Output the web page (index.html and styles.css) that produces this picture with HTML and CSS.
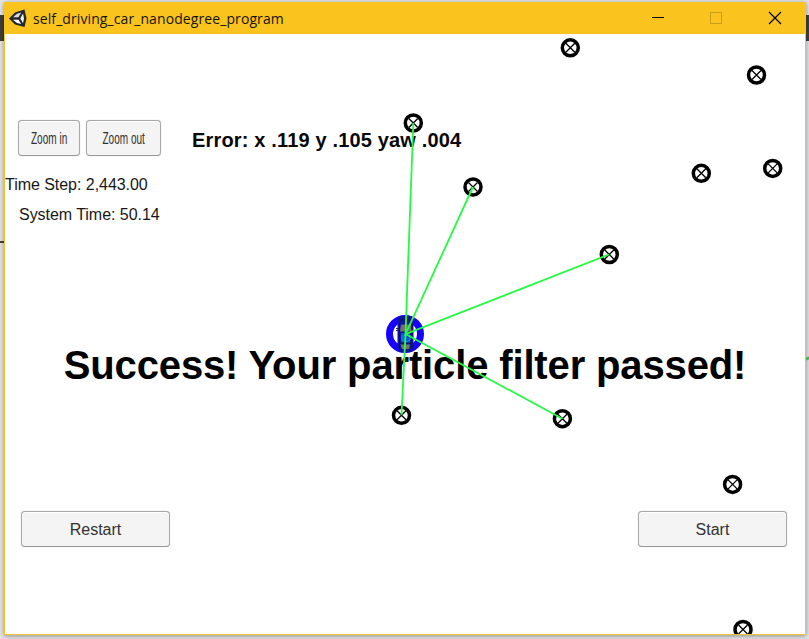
FILE: index.html
```
<!DOCTYPE html>
<html lang="en">
<head>
<meta charset="utf-8">
<title>self_driving_car_nanodegree_program</title>
<link rel="stylesheet" href="styles.css">
</head>
<body>
<div class="desktop-strip"></div>
<div class="desktop-line"></div>
<div class="window">
  <header class="titlebar">
    <svg class="logo" width="18" height="19" viewBox="0 0 18 19">
      <path d="M0 9.5 6 3.5 15.5 0.5 17.5 9.5 15.5 18 6 15.5Z" fill="#25282b"/>
      <path d="M4 8.3 8 4.7 12.2 3.5 9.5 8.3Z" fill="#d5dde2"/>
      <path d="M4 10.7 9.5 10.7 12.2 15 8 14Z" fill="#fff"/>
      <path d="M11.3 9.5 14 4.5 15 9.5 14 14.3Z" fill="#f4f7f8"/>
    </svg>
    <span class="title">self_driving_car_nanodegree_program</span>
    <svg class="controls" width="125" height="14" viewBox="0 0 125 14" fill="none" shape-rendering="crispEdges">
      <path d="M0 6.5H12" stroke="#000"/>
      <rect x="58.5" y="1.5" width="11" height="11" stroke="#c99c1c"/>
      <path d="M117 1 129 13M129 1 117 13" stroke="#000" stroke-width="1.2" shape-rendering="auto"/>
    </svg>
  </header>
  <main class="scene">
    <div class="top">
      <div class="zoom">
        <button class="btn zoom-in"><span>Zoom in</span></button>
        <button class="btn zoom-out"><span>Zoom out</span></button>
      </div>
      <div class="error"><span>Error: x .119 y .105 yaw .004</span></div>
    </div>
    <p class="stat">Time Step: 2,443.00</p>
    <p class="stat system">System Time: 50.14</p>
    <h1 class="message"><span>Success! Your particle filter passed!</span></h1>
    <div class="actions">
      <button class="btn action">Restart</button>
      <button class="btn action">Start</button>
    </div>
    <svg class="map" width="800" height="600" viewBox="5 34 800 600">
      <defs>
        <g id="landmark">
          <circle r="8" fill="none" stroke="#000" stroke-width="3.5"/>
          <path d="M-4.5-4.5 4.5 4.5M4.5-4.5-4.5 4.5" stroke="#000" stroke-width="1.3"/>
        </g>
      </defs>
      <use href="#landmark" x="570.3" y="47.8"/>
      <use href="#landmark" x="756.5" y="75"/>
      <use href="#landmark" x="413.3" y="123"/>
      <use href="#landmark" x="473" y="187"/>
      <use href="#landmark" x="701.3" y="173.3"/>
      <use href="#landmark" x="772.7" y="168.4"/>
      <use href="#landmark" x="609.3" y="254.5"/>
      <use href="#landmark" x="401.5" y="415.3"/>
      <use href="#landmark" x="562.4" y="418.7"/>
      <use href="#landmark" x="732.6" y="484.4"/>
      <use href="#landmark" x="743" y="629.5"/>
      <circle cx="405" cy="334" r="15.5" fill="#fff" stroke="#1600ff" stroke-width="7"/>
      <path d="M399 316H412L413.5 322V348L411 352H400L397.500 347V322Z" fill="#10149b"/>
      <path d="M396 328.500H399M396 330.500H398.500" stroke="#171a50"/>
      <path d="M401 324.500H411L412 331.500H400Z" fill="#73716c"/>
      <path d="M400.500 344.500H410L409 349H402Z" fill="#77756d"/>
      <path d="M401 333H410V343H401Z" fill="#0657d6"/>
      <path d="M400 320H411M400 343H411M399.500 323V348M412 323V348" stroke="#10152e" fill="none"/>
      <path d="M402 335V340L406 342 410 340V335" fill="none" stroke="#089bed"/>
      <g class="rays"><path d="M413.300 123 405.500 334 401.500 415M473 187 405.500 334 609 254.500M405.500 334 562.400 418.700"/></g>
    </svg>
  </main>
</div>
<div class="desktop-mark"></div>
</body>
</html>
```
FILE: styles.css
```
* { box-sizing: border-box; }
body {
  margin: 0;
  width: 809px;
  height: 639px;
  padding: 2px 3px 4px 4px;
  overflow: hidden;
  position: relative;
  background: #e5e5e7;
  font-family: "Liberation Sans", Arial, sans-serif;
}
.desktop-strip {
  position: absolute;
  left: 0;
  top: 15px;
  width: 809px;
  height: 26px;
  background: #403f3b;
}
.desktop-line {
  position: absolute;
  left: 0;
  top: 241px;
  width: 4px;
  height: 2px;
  background: #444;
}
.desktop-mark {
  position: absolute;
  left: 806px;
  top: 357px;
  width: 3px;
  height: 3px;
  background: #42b751;
  transform: skewY(-18deg);
}
.window {
  position: relative;
  width: 802px;
  height: 633px;
  background: #fff;
  border: 1px solid #f5c32f;
  border-top: 0;
  box-shadow: 0 1px 5px rgba(0, 0, 0, .4);
}
.titlebar {
  display: flex;
  align-items: center;
  height: 32px;
  margin: 0 -1px;
  padding: 0 24px 0 5px;
  background: #fac31e;
}
.logo { margin-right: 6px; }
.title {
  padding-top: 2px;
  font: 14px/20px "Open Sans", sans-serif;
  letter-spacing: .09px;
  white-space: nowrap;
  color: #161300;
}
.controls {
  margin-left: auto;
  overflow: visible;
  margin-right: 5px;
}
.scene {
  position: relative;
  height: 600px;
  overflow: hidden;
  padding-top: 86px;
}
.top { display: flex; height: 36px; }
.zoom { display: flex; gap: 6px; margin-left: 13px; }
.btn {
  padding: 0;
  height: 36px;
  border: 1px solid #a9a9a9;
  border-bottom-color: #989898;
  border-radius: 4px;
  background: #f4f4f4;
  box-shadow: inset 0 1px #fff, 0 0 1px #bbb;
  color: #323232;
  font: 16px "Liberation Sans", Arial, sans-serif;
  white-space: nowrap;
}
.zoom-in { width: 62px; }
.zoom-out { width: 75px; }
.zoom .btn { display: flex; align-items: center; justify-content: center; font-size: 15px; }
.zoom span { transform: scale(.67, 1.08); }
.error {
  margin-left: 31px;
  line-height: 41px;
  font-size: 20px;
  font-weight: bold;
  letter-spacing: .16px;
  color: #080808;
  white-space: nowrap;
}
.stat {
  margin: 19px 0 0;
  font-size: 16px;
  line-height: 20px;
  letter-spacing: -.04px;
  color: #171717;
}
.system { margin: 10px 0 0 14px; }
.message {
  margin: 115px 0 0;
  height: 50px;
  line-height: 50px;
  text-align: center;
  font-size: 40px;
  letter-spacing: -.14px;
  color: #000;
  white-space: nowrap;
}
.actions {
  display: flex;
  justify-content: space-between;
  margin: 121px 18px 0 16px;
}
.action { width: 149px; padding-top: 2px; }
.map {
  position: absolute;
  inset: 0;
  pointer-events: none;
}
.rays {
  fill: none;
  stroke: #24fb42;
  stroke-width: 1.8;
}
```
